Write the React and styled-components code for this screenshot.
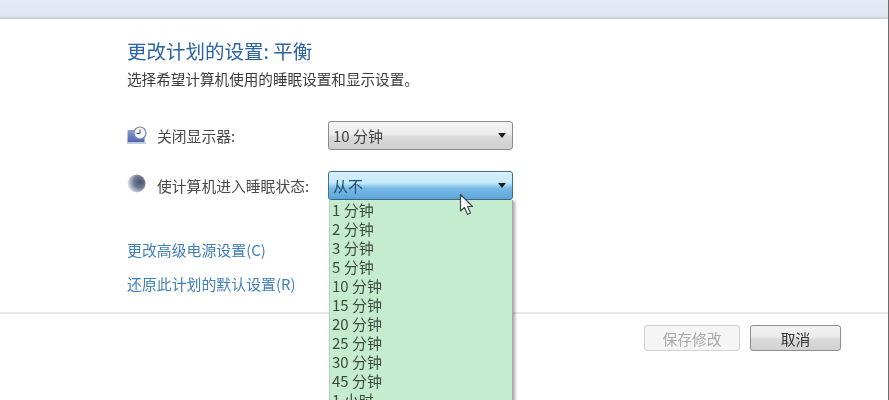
import React from "react";
import styled, { createGlobalStyle } from "styled-components";

const Global = createGlobalStyle`
  html, body { margin: 0; padding: 0; background: #fff; }
  body { font-family: "Noto Sans CJK SC", "Liberation Sans", sans-serif; }
`;
const Page = styled.div`
  width: 889px; height: 400px; overflow: hidden; position: relative; box-sizing: border-box;
  border-right: 1px solid #6d6d6d; background: #fff; filter: blur(0.45px);
`;
const TopBar = styled.div`
  height: 17px; background: linear-gradient(#e6ebf6, #dfe5f2); border-bottom: 2px solid #ccd3dc;
`;
const Main = styled.div`
  height: 295px; box-sizing: border-box; padding: 20px 0 0 127px; border-bottom: 2px solid #e6e6e6;
  display: flex; flex-direction: column;
`;
const Title = styled.h1`
  margin: 0; font-size: 19.5px; line-height: 24px; font-weight: 400; color: #2a64a4;
`;
const Sub = styled.p`
  margin: 6px 0 0; font-size: 14.6px; line-height: 20px; color: #3c3c3c;
`;
const Rows = styled.div`
  margin-top: 32px; display: flex; flex-direction: column; gap: 22px;
`;
const Row = styled.div`
  display: flex; align-items: center; height: 28px;
`;
const IconSlot = styled.div`
  width: 30px; display: flex; align-items: center; flex: none;
`;
const Label = styled.span`
  width: 171px; flex: none; font-size: 14.8px; color: #4a4a4a; white-space: nowrap;
`;
const Select = styled.div`
  width: 185px; height: 29px; box-sizing: border-box; border-radius: 3px; display: flex; align-items: center;
  justify-content: space-between; padding: 0 6px 0 4px; font-size: 15px; color: ${p => p.$open ? "#1f4f70" : "#444"};
  border: 1px solid ${p => p.$open ? "#3d6f8f" : "#8c8c8c"};
  background: ${p => p.$open
    ? "linear-gradient(#d8f1fd 0%, #c4e8fb 40%, #78b9e6 60%, #5fa6da 100%)"
    : "linear-gradient(#f4f4f4 0%, #ececec 45%, #d9d9d9 55%, #cfcfcf 100%)"};
`;
const Arrow = styled.span`
  width: 0; height: 0; border-left: 4.5px solid transparent; border-right: 4.5px solid transparent;
  border-top: 5px solid #1d1d1d;
`;
const Links = styled.div`
  margin-top: 41px; display: flex; flex-direction: column; gap: 14px;
`;
const LinkText = styled.a`
  font-size: 14.9px; line-height: 20px; color: #3f80b8;
`;
const Footer = styled.div`
  display: flex; justify-content: flex-end; gap: 10px; padding: 11px 47px 0 0;
`;
const Button = styled.div`
  height: 26px; box-sizing: border-box; border-radius: 3px; display: flex; align-items: center; justify-content: center;
  font-size: 14.8px; width: ${p => p.$w}px;
  color: ${p => p.$disabled ? "#a8a8a8" : "#333"};
  border: 1px solid ${p => p.$disabled ? "#d2d2d2" : "#8e8e8e"};
  background: ${p => p.$disabled ? "#f5f5f5" : "linear-gradient(#f3f3f3 0%, #ebebeb 45%, #dadada 55%, #d2d2d2 100%)"};
`;
const Dropdown = styled.ul`
  position: absolute; left: 329px; top: 200px; width: 184px; height: 215px; margin: 0; padding: 0 0 0 2px; box-sizing: border-box;
  list-style: none; background: #c6ecd0; border-right: 1px solid #a9a9a9; border-left: 1px solid #b5cfbb;
  box-shadow: 2px 1px 3px rgba(0,0,0,.35);
`;
const Item = styled.li`
  height: 19px; line-height: 19px; font-size: 15px; color: #3c4a3e;
`;
const Cursor = styled.svg`
  position: absolute; left: 459px; top: 193px;
`;

const items = ["1 分钟","2 分钟","3 分钟","5 分钟","10 分钟","15 分钟","20 分钟","25 分钟","30 分钟","45 分钟","1 小时"];

const MonitorIcon = () => (
  <svg width="22" height="18" viewBox="0 0 22 18" style={{marginTop: -1}}>
    <defs><linearGradient id="m" x1="0" y1="0" x2="0" y2="1"><stop offset="0" stopColor="#8e9fd4"/><stop offset="1" stopColor="#4a5fa8"/></linearGradient></defs>
    <rect x="0.5" y="4" width="17" height="13" rx="1" fill="url(#m)"/>
    <rect x="0" y="16" width="19" height="2" fill="#c4cbe0"/>
    <circle cx="13" cy="7" r="6" fill="#f3f5fa" stroke="#7e88a5" strokeWidth="1.2"/>
    <path d="M13 3.5V7.5H9.5" fill="none" stroke="#444" strokeWidth="1"/>
  </svg>
);
const MoonIcon = () => (
  <svg width="20" height="20" viewBox="0 0 20 20" style={{marginTop: -2}}>
    <defs><radialGradient id="s" cx=".68" cy=".42" r=".68"><stop offset="0" stopColor="#4a5268"/><stop offset=".5" stopColor="#737a94"/><stop offset="1" stopColor="#e4e7f0"/></radialGradient></defs>
    <circle cx="9.5" cy="9.5" r="9" fill="url(#s)"/>
  </svg>
);

export default function App() {
  return (
    <Page>
      <Global />
      <TopBar />
      <Main>
        <Title>更改计划的设置: 平衡</Title>
        <Sub>选择希望计算机使用的睡眠设置和显示设置。</Sub>
        <Rows>
          <Row>
            <IconSlot><MonitorIcon /></IconSlot>
            <Label>关闭显示器:</Label>
            <Select>10 分钟<Arrow /></Select>
          </Row>
          <Row>
            <IconSlot><MoonIcon /></IconSlot>
            <Label>使计算机进入睡眠状态:</Label>
            <Select $open>从不<Arrow /></Select>
          </Row>
        </Rows>
        <Links>
          <LinkText>更改高级电源设置(C)</LinkText>
          <LinkText>还原此计划的默认设置(R)</LinkText>
        </Links>
      </Main>
      <Footer>
        <Button $disabled $w={96}>保存修改</Button>
        <Button $w={91}>取消</Button>
      </Footer>
      <Dropdown>
        {items.map(t => <Item key={t}>{t}</Item>)}
      </Dropdown>
      <Cursor width="16" height="24" viewBox="0 0 16 24">
        <path d="M1.5 1.5V18L5.5 14.5L8.5 21.5L11.5 20L8.5 13.5H13.5Z" fill="#fff" stroke="#3a4a50" strokeWidth="1.2" strokeLinejoin="round"/>
      </Cursor>
    </Page>
  );
}
